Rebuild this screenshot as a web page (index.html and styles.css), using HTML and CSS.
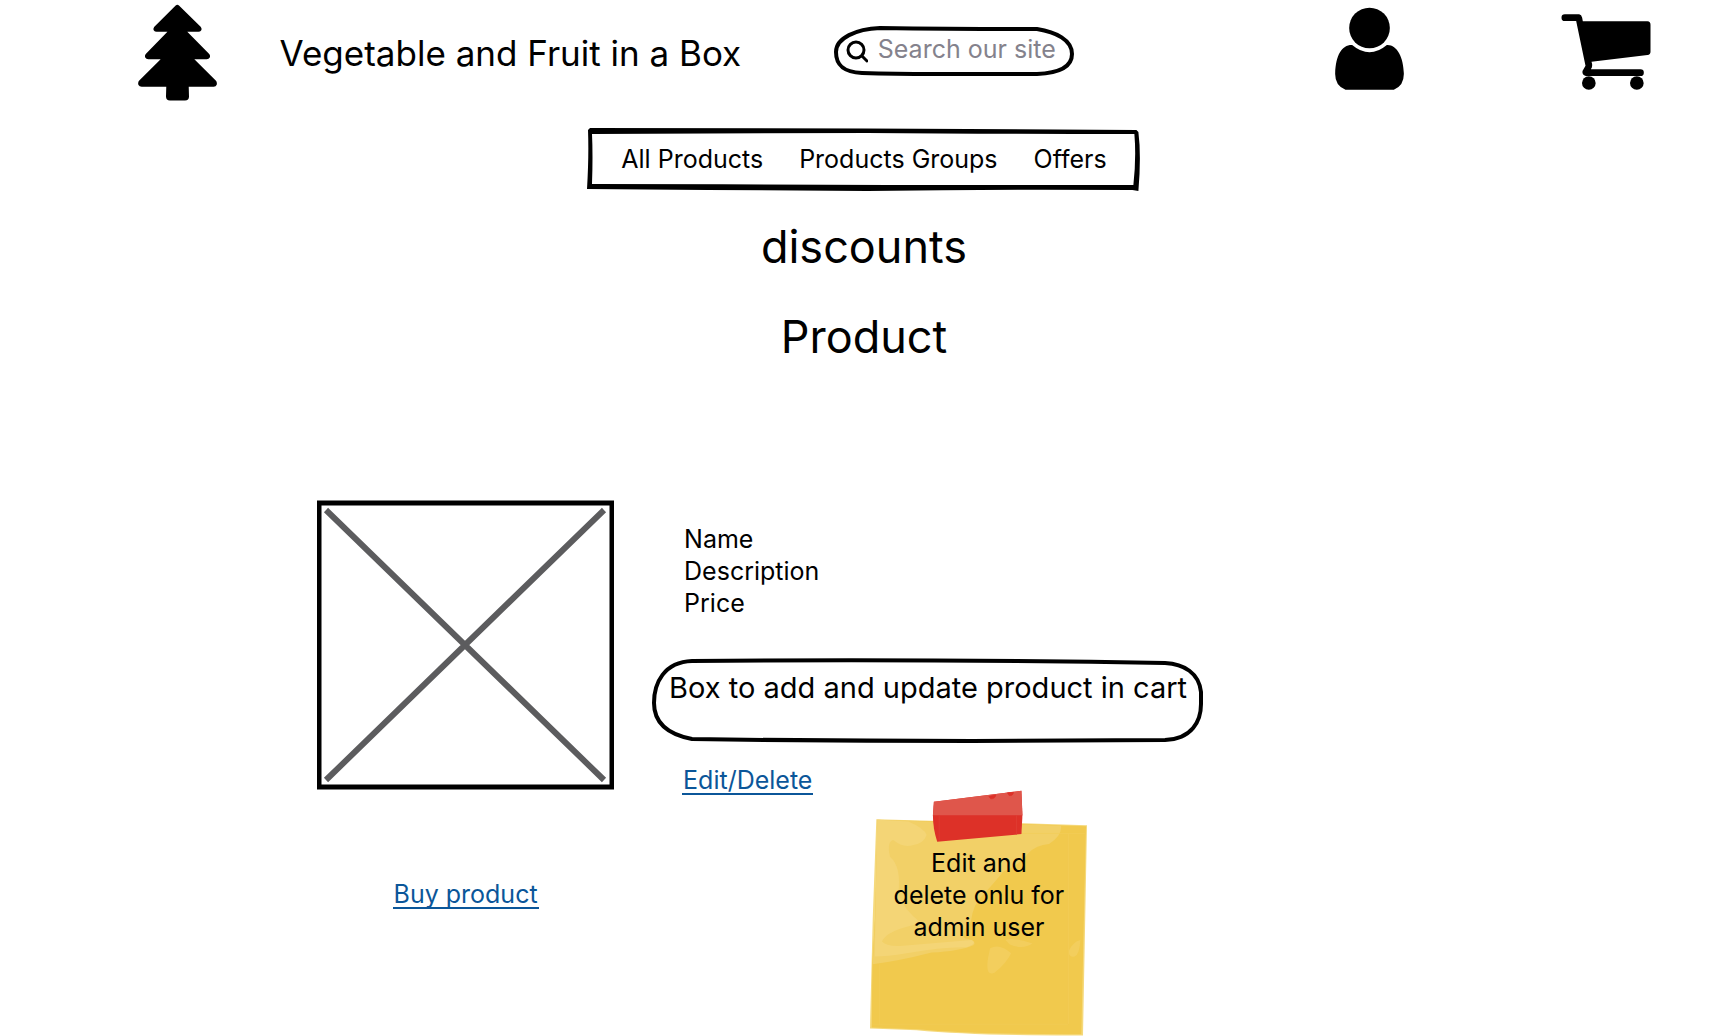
FILE: index.html
```html
<!DOCTYPE html>
<html lang="en">
<head>
<meta charset="utf-8">
<meta name="viewport" content="width=device-width, initial-scale=1">
<title>Vegetable and Fruit in a Box</title>
<link rel="stylesheet" href="styles.css">
</head>
<body>
<header class="header">
  <div class="brand">
    <svg class="tree" viewBox="53 13 237 290" aria-hidden="true">
      <path d="M171 22 L107 86 Q105 89 109 89 H158 L82 167 Q79 171 84 171 H138 L61 248 Q59 254 64 254 H145 L144 290 Q144 295 149 295 H194 Q199 295 199 290 L198 254 H280 Q284 254 282 248 L205 171 H259 Q264 171 261 167 L184 89 H234 Q238 89 236 86 Z" fill="#000" stroke="#000" stroke-width="14" stroke-linejoin="round"/>
    </svg>
    <h1 class="title">Vegetable and Fruit in a Box</h1>
  </div>
  <form class="search" role="search">
    <svg class="sketch" viewBox="0 0 240 50" preserveAspectRatio="none" aria-hidden="true">
      <path d="M46 2 C22 3 2 12 2 26 C2 38 8 46 28 47 Q60 48 100 48 H203 C226 47 238 40 238 28 C238 14 222 6 203 3 Q120 3 46 2 Z"/>
    </svg>
    <svg class="lens" viewBox="0 0 22 23" aria-hidden="true"><circle cx="10" cy="10" r="8"/><path d="M16 16 L21 21"/></svg>
    <input class="search-input" type="text" placeholder="Search our site" aria-label="Search our site">
  </form>
  <div class="actions">
    <a class="icon-link" href="#account" aria-label="Account">
      <svg class="user" viewBox="105 21 206 249"><circle cx="208" cy="84" r="61"/><path d="M156 135 Q208 179 260 135 C290 133 310 172 311 220 Q312 258 281 269 H136 Q104 258 105 220 C107 165 125 134 156 135 Z"/></svg>
    </a>
    <a class="icon-link" href="#cart" aria-label="Cart">
      <svg class="cart" viewBox="782 42 269 228"><path d="M793 43 H836 Q843 44 845 53 L847 64 H1041 Q1050 65 1050 74 V155 Q1050 164 1041 165 L873 185 Q878 198 871 208 H1020 A10 10 0 0 1 1020 228 H856 Q844 225 846 213 L855 197 L827 63 H793 A10 10 0 0 1 793 43 Z"/><circle cx="865" cy="249" r="20.500"/><circle cx="1009" cy="249" r="20.500"/></svg>
    </a>
  </div>
</header>
<nav class="nav" aria-label="Main">
  <svg class="sketch-fill" viewBox="0 0 553 64" preserveAspectRatio="none" aria-hidden="true">
    <path fill-rule="evenodd" d="M1 2 L3 0 Q190 0 380 1 L549 2 L551 4 Q554 28 551 64 L545 63 Q410 62 280 64 L120 63 L0 62 Q2 28 1 2 Z M5 6 Q6 28 5 57 Q160 57 300 58 L546 58 Q549 30 547 6 Q400 6 280 5 Z"/>
  </svg>
  <a class="nav-link" href="#all">All Products</a>
  <a class="nav-link" href="#groups">Products Groups</a>
  <a class="nav-link" href="#offers">Offers</a>
</nav>
<main>
  <h2 class="heading">discounts</h2>
  <h2 class="heading">Product</h2>
  <section class="product">
    <div class="media">
      <svg class="picture" viewBox="0 0 297 290" role="img" aria-label="Product picture">
        <path d="M2 3 H295 V287 H2 Z" fill="none" stroke="#000" stroke-width="5"/>
        <path d="M9 10 L287 280 M287 10 L9 280" fill="none" stroke="#5c5c5e" stroke-width="6"/>
      </svg>
      <a class="link" href="#buy">Buy product</a>
    </div>
    <div class="details">
      <div class="facts">
        <p>Name</p>
        <p>Description</p>
        <p>Price</p>
      </div>
      <button class="update" type="button">
        <svg class="sketch" viewBox="0 0 552 85" preserveAspectRatio="none" aria-hidden="true">
          <path d="M40 2 C12 3 2 24 2 44 C2 62 14 75 40 80 Q180 82 320 82 L513 81 C540 80 549 62 549 45 V33 C547 14 532 5 513 4 Q280 0 40 2 Z"/>
        </svg>
        Box to add and update product in cart
      </button>
      <div class="admin">
        <a class="link" href="#edit">Edit/Delete</a>
        <aside class="note">
          <svg class="paper" viewBox="60 30 652 738" aria-hidden="true">
            <path d="M79 117 L300 123 L712 135 L706 450 L700 767 Q380 768 200 751 L60 746 Q66 430 79 117 Z" fill="#f5d97c"/>
            <path d="M83 120 L300 124 L709 138 L702 450 L695 763 Q380 764 200 748 L65 743 L67 550 L76 400 Z" fill="#f1c94d"/>
            <path d="M82 119 L634 137 Q638 165 598 192 Q560 195 535 220 Q510 255 460 275 Q432 310 402 342 Q370 370 363 425 Q330 460 345 475 Q385 484 370 496 Q330 514 245 518 Q140 545 68 553 L76 400 Z" fill="#f2d067"/>
            <path d="M82 119 L175 124 Q225 145 230 165 Q222 190 190 195 Q160 205 130 180 Q110 185 120 230 Q155 260 145 340 Q160 390 215 430 Q110 450 96 485 Q110 500 150 498 L365 480 Q385 490 350 502 Q280 500 170 520 Q110 530 74 530 Z" fill="#f4d576"/>
            <path d="M421 505 Q450 490 484 520 Q470 550 435 578 Q405 592 415 532 Z M467 480 Q485 470 548 491 Q520 510 480 494 Z M692 480 Q690 522 675 530 Q655 533 658 512 Q670 485 692 480 Z" fill="#f3ce5d"/>
            <path d="M88 553 V735 M67 733 H656 V160 M515 160 H708" fill="none" stroke="#f2cc58" stroke-width="2"/>
            <path d="M252 65 L515 32 L518 105 L515 162 L262 185 Q249 145 249 105 Z" fill="#dd3128"/>
            <path d="M252 65 L515 32 L518 105 H249 Z" fill="#df564b"/>
            <path d="M417 49 L438 44 Q437 56 423 56 Z M473 38 L491 36 Q490 48 478 46 Z" fill="#dd3128" stroke="#dd3128" stroke-width="2"/>
            <path d="M268 106 V181 M500 106 V163" stroke="#df4137" stroke-width="2"/>
          </svg>
          <p class="note-text">Edit and<br>delete onlu for<br>admin user</p>
        </aside>
      </div>
    </div>
  </section>
</main>
</body>
</html>
```
FILE: styles.css
```css
* {
  box-sizing: border-box;
}

body {
  margin: 0;
  background: #fff;
  color: #000;
  font-family: Inter, "Open Sans", sans-serif;
  font-size: 25px;
  line-height: 32px;
}

h1,
h2,
p {
  margin: 0;
  font-weight: 400;
}

svg {
  display: block;
}

a {
  color: inherit;
  text-decoration: none;
}

.header {
  display: grid;
  grid-template-columns: 48.25% auto 1fr;
  align-items: start;
  padding: 4px 0 0;
}

.brand {
  display: flex;
  align-items: center;
  gap: 63px;
  padding-left: 16.5%;
}

.tree {
  flex: none;
  width: 79px;
  height: 97px;
}

.title {
  font-size: 35px;
  line-height: 40px;
  white-space: nowrap;
}

.search {
  position: relative;
  display: flex;
  gap: 10px;
  width: 240px;
  height: 50px;
  margin-top: 22px;
  padding: 7px 4px 9px 12px;
}

.sketch,
.sketch-fill {
  position: absolute;
  inset: 0;
  width: 100%;
  height: 100%;
  overflow: visible;
}

.sketch {
  fill: none;
  stroke: #000;
  stroke-width: 4;
}

.lens {
  position: relative;
  flex: none;
  width: 22px;
  height: 23px;
  margin-top: 7px;
  fill: none;
  stroke: #000;
  stroke-width: 3;
  stroke-linecap: round;
}

.search-input {
  position: relative;
  flex: 1;
  min-width: 0;
  height: 32px;
  margin: 0;
  padding: 0;
  border: 0;
  outline: 0;
  background: none;
  font: inherit;
}

.search-input::placeholder {
  color: #84828c;
  opacity: 1;
}

.actions {
  display: flex;
  justify-content: flex-end;
  gap: 157px;
  padding: 3px 77px 0 0;
}

.user {
  width: 69px;
  height: 83px;
}

.cart {
  width: 90px;
  height: 76px;
  margin-top: 7px;
}

.nav {
  position: relative;
  display: flex;
  justify-content: center;
  gap: 36px;
  width: fit-content;
  margin: 27px auto 0;
  padding: 15px 34px 16px;
}

.nav-link {
  position: relative;
}

.heading {
  margin-top: 22px;
  font-size: 45px;
  line-height: 68px;
  text-align: center;
}

.product {
  display: flex;
  gap: 38px;
  margin-top: 129px;
  padding-left: 18.35%;
}

.media {
  display: flex;
  flex: none;
  flex-direction: column;
  align-items: center;
  gap: 91px;
}

.picture {
  width: 297px;
  height: 290px;
}

.link {
  padding: 0 1px;
  border-bottom: 2px solid #0b5699;
  color: #0b5699;
  line-height: 26px;
}

.details {
  padding-top: 23px;
}

.facts {
  padding-left: 32px;
}

.update {
  position: relative;
  width: 552px;
  height: 85px;
  margin-top: 40px;
  padding: 13px 0 40px;
  border: 0;
  background: none;
  color: inherit;
  font: inherit;
  font-size: 29px;
  white-space: nowrap;
}

.admin {
  display: flex;
  align-items: flex-start;
  gap: 57px;
  margin-top: 23px;
  padding-left: 30px;
}

.note {
  display: grid;
  margin-top: 23px;
}

.paper,
.note-text {
  grid-area: 1 / 1;
}

.paper {
  width: 217px;
  height: 246px;
}

.note-text {
  z-index: 1;
  padding-top: 57px;
  text-align: center;
}
```
